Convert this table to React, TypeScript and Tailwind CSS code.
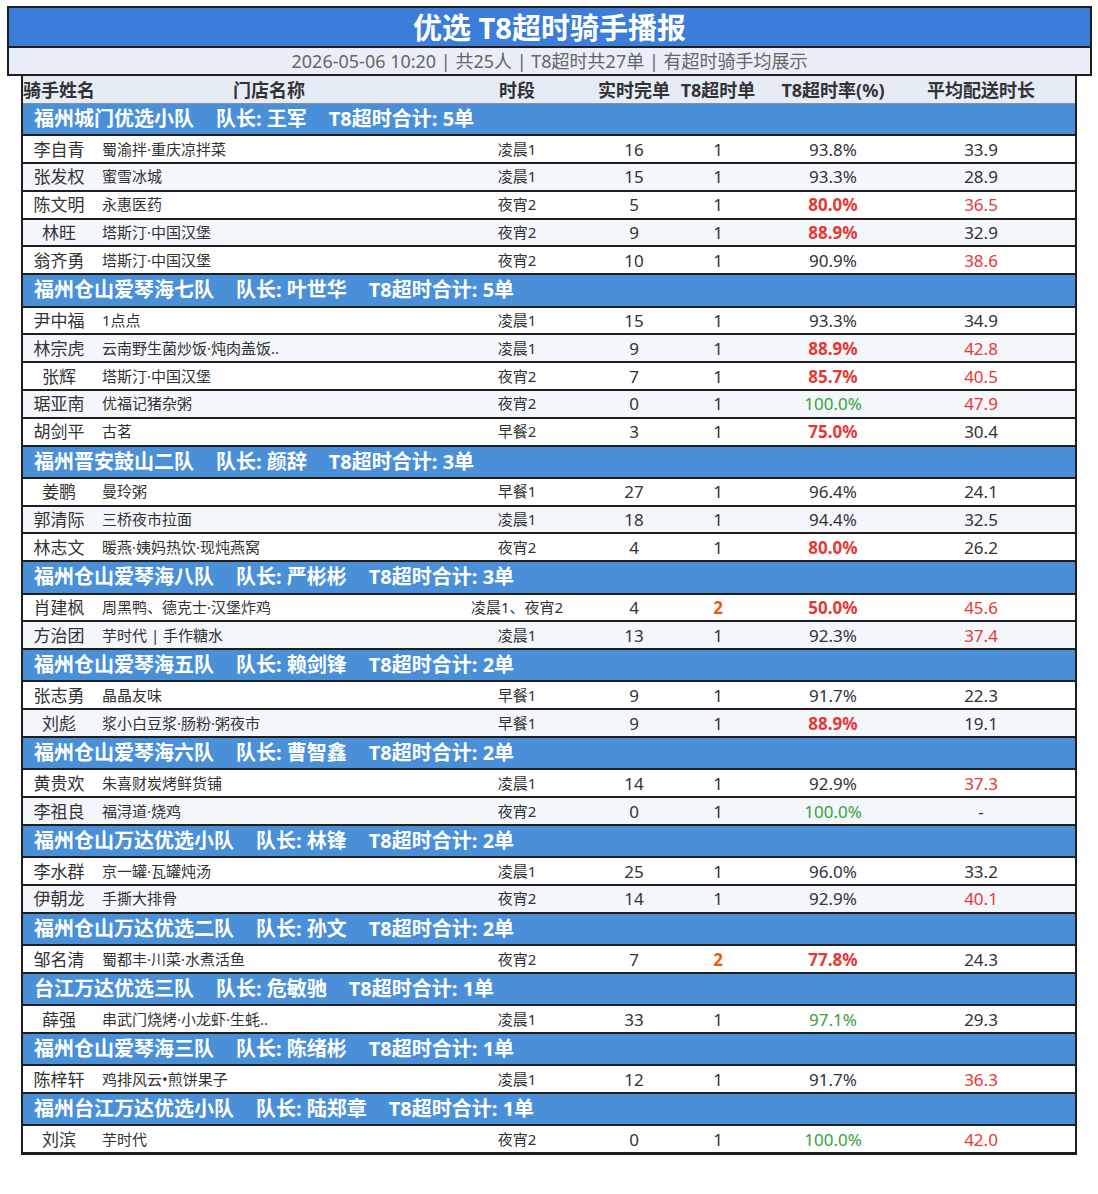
import React from 'react';

type Rider = {
    name: string;
    store: string;
    slot: string;
    done: number;
    t8: number;
    rate: number;
    avg: number | null;
};

type Team = {
    team: string;
    leader: string;
    total: number;
    riders: Rider[];
};

const teams: Team[] = [
    {
        team: '福州城门优选小队', leader: '王军', total: 5,
        riders: [
            { name: '李自青', store: '蜀渝拌·重庆凉拌菜', slot: '凌晨1', done: 16, t8: 1, rate: 93.8, avg: 33.9 },
            { name: '张发权', store: '蜜雪冰城', slot: '凌晨1', done: 15, t8: 1, rate: 93.3, avg: 28.9 },
            { name: '陈文明', store: '永惠医药', slot: '夜宵2', done: 5, t8: 1, rate: 80.0, avg: 36.5 },
            { name: '林旺', store: '塔斯汀·中国汉堡', slot: '夜宵2', done: 9, t8: 1, rate: 88.9, avg: 32.9 },
            { name: '翁齐勇', store: '塔斯汀·中国汉堡', slot: '夜宵2', done: 10, t8: 1, rate: 90.9, avg: 38.6 },
        ],
    },
    {
        team: '福州仓山爱琴海七队', leader: '叶世华', total: 5,
        riders: [
            { name: '尹中福', store: '1点点', slot: '凌晨1', done: 15, t8: 1, rate: 93.3, avg: 34.9 },
            { name: '林宗虎', store: '云南野生菌炒饭·炖肉盖饭..', slot: '凌晨1', done: 9, t8: 1, rate: 88.9, avg: 42.8 },
            { name: '张辉', store: '塔斯汀·中国汉堡', slot: '夜宵2', done: 7, t8: 1, rate: 85.7, avg: 40.5 },
            { name: '琚亚南', store: '优福记猪杂粥', slot: '夜宵2', done: 0, t8: 1, rate: 100.0, avg: 47.9 },
            { name: '胡剑平', store: '古茗', slot: '早餐2', done: 3, t8: 1, rate: 75.0, avg: 30.4 },
        ],
    },
    {
        team: '福州晋安鼓山二队', leader: '颜辞', total: 3,
        riders: [
            { name: '姜鹏', store: '曼玲粥', slot: '早餐1', done: 27, t8: 1, rate: 96.4, avg: 24.1 },
            { name: '郭清际', store: '三桥夜市拉面', slot: '凌晨1', done: 18, t8: 1, rate: 94.4, avg: 32.5 },
            { name: '林志文', store: '暖燕·姨妈热饮·现炖燕窝', slot: '夜宵2', done: 4, t8: 1, rate: 80.0, avg: 26.2 },
        ],
    },
    {
        team: '福州仓山爱琴海八队', leader: '严彬彬', total: 3,
        riders: [
            { name: '肖建枫', store: '周黑鸭、德克士·汉堡炸鸡', slot: '凌晨1、夜宵2', done: 4, t8: 2, rate: 50.0, avg: 45.6 },
            { name: '方治团', store: '芋时代 | 手作糖水', slot: '凌晨1', done: 13, t8: 1, rate: 92.3, avg: 37.4 },
        ],
    },
    {
        team: '福州仓山爱琴海五队', leader: '赖剑锋', total: 2,
        riders: [
            { name: '张志勇', store: '晶晶友味', slot: '早餐1', done: 9, t8: 1, rate: 91.7, avg: 22.3 },
            { name: '刘彪', store: '浆小白豆浆·肠粉·粥夜市', slot: '早餐1', done: 9, t8: 1, rate: 88.9, avg: 19.1 },
        ],
    },
    {
        team: '福州仓山爱琴海六队', leader: '曹智鑫', total: 2,
        riders: [
            { name: '黄贵欢', store: '朱喜财炭烤鲜货铺', slot: '凌晨1', done: 14, t8: 1, rate: 92.9, avg: 37.3 },
            { name: '李祖良', store: '福浔道·烧鸡', slot: '夜宵2', done: 0, t8: 1, rate: 100.0, avg: null },
        ],
    },
    {
        team: '福州仓山万达优选小队', leader: '林锋', total: 2,
        riders: [
            { name: '李水群', store: '京一罐·瓦罐炖汤', slot: '凌晨1', done: 25, t8: 1, rate: 96.0, avg: 33.2 },
            { name: '伊朝龙', store: '手撕大排骨', slot: '夜宵2', done: 14, t8: 1, rate: 92.9, avg: 40.1 },
        ],
    },
    {
        team: '福州仓山万达优选二队', leader: '孙文', total: 2,
        riders: [
            { name: '邹名清', store: '蜀都丰·川菜·水煮活鱼', slot: '夜宵2', done: 7, t8: 2, rate: 77.8, avg: 24.3 },
        ],
    },
    {
        team: '台江万达优选三队', leader: '危敏驰', total: 1,
        riders: [
            { name: '薛强', store: '串武门烧烤·小龙虾·生蚝..', slot: '凌晨1', done: 33, t8: 1, rate: 97.1, avg: 29.3 },
        ],
    },
    {
        team: '福州仓山爱琴海三队', leader: '陈绪彬', total: 1,
        riders: [
            { name: '陈梓轩', store: '鸡排风云•煎饼果子', slot: '凌晨1', done: 12, t8: 1, rate: 91.7, avg: 36.3 },
        ],
    },
    {
        team: '福州台江万达优选小队', leader: '陆郑章', total: 1,
        riders: [
            { name: '刘滨', store: '芋时代', slot: '夜宵2', done: 0, t8: 1, rate: 100.0, avg: 42.0 },
        ],
    },
];

// latin glyphs from Noto Sans so the middle dot stays narrow, CJK falls through
const font = { fontFamily: '"Noto Sans", "Noto Sans CJK SC", sans-serif' };

const rateClass = (rate: number) => {
    if (rate < 90) return 'text-[#e53935] font-bold';
    if (rate >= 97) return 'text-[#3a9f3a]';
    return 'text-[#333]';
};

const RiderRow: React.FC<{ r: Rider; odd: boolean }> = ({ r, odd }) => (
    <div className={`flex h-[27.8px] items-center border-b-2 border-[#1e1e1e] text-[#333] ${odd ? 'bg-[#f3f6fb]' : 'bg-white'}`}>
        <div className="w-[72px] whitespace-nowrap text-center text-[17px] leading-none">{r.name}</div>
        <div className="w-[348px] pl-[7px] text-[15px] leading-none">{r.store}</div>
        <div className="w-[148px] text-center text-[15px] leading-none">{r.slot}</div>
        <div className="w-[86px] text-center text-[17px] leading-none">{r.done}</div>
        <div className={`w-[82px] text-center text-[17px] leading-none ${r.t8 > 1 ? 'font-bold text-[#e8590c]' : ''}`}>{r.t8}</div>
        <div className={`w-[148px] text-center text-[17px] leading-none ${rateClass(r.rate)}`}>{r.rate.toFixed(1)}%</div>
        <div className={`w-[148px] text-center text-[17px] leading-none ${r.avg !== null && r.avg > 35 ? 'text-[#e53935]' : ''}`}>
            {r.avg === null ? '-' : r.avg.toFixed(1)}
        </div>
    </div>
);

export default function App() {
    return (
        <div className="min-h-[1194px] bg-white pt-[6px]" style={font}>
            <div className="ml-[7px] w-[1085px] border-2 border-[#1e1e1e]">
                <div className="flex h-[40px] items-center justify-center border-b-2 border-[#1e1e1e] bg-[#3b7dd8] text-[29px] font-bold leading-none text-white">
                    优选 T8超时骑手播报
                </div>
                <div className="flex h-[26px] items-center justify-center bg-[#e9eef8] text-[18px] leading-none text-[#666]">
                    2026-05-06 10:20 | 共25人 | T8超时共27单 | 有超时骑手均展示
                </div>
            </div>
            <div className="ml-[21px] w-[1056px] border-x-2 border-b border-[#1e1e1e]">
                <div className="flex h-[28px] items-center border-b border-[#8a8f99] bg-[#e6ecf6] text-[18px] font-bold leading-none text-[#333]">
                    <div className="w-[72px] whitespace-nowrap text-center">骑手姓名</div>
                    <div className="w-[348px] text-center">门店名称</div>
                    <div className="w-[148px] text-center">时段</div>
                    <div className="w-[86px] whitespace-nowrap text-center">实时完单</div>
                    <div className="w-[82px] whitespace-nowrap text-center">T8超时单</div>
                    <div className="w-[148px] text-center">T8超时率(%)</div>
                    <div className="w-[148px] text-center">平均配送时长</div>
                </div>
                {teams.map((t) => (
                    <div key={t.team}>
                        <div className="flex h-[32.3px] items-center gap-[22px] border-b-2 border-[#1e1e1e] bg-[#4a90d9] pl-[11px] text-[20px] font-bold leading-none text-white">
                            <span>{t.team}</span>
                            <span>队长: {t.leader}</span>
                            <span>T8超时合计: {t.total}单</span>
                        </div>
                        {t.riders.map((r, i) => (
                            <RiderRow key={r.name} r={r} odd={i % 2 === 1} />
                        ))}
                    </div>
                ))}
            </div>
        </div>
    );
}
